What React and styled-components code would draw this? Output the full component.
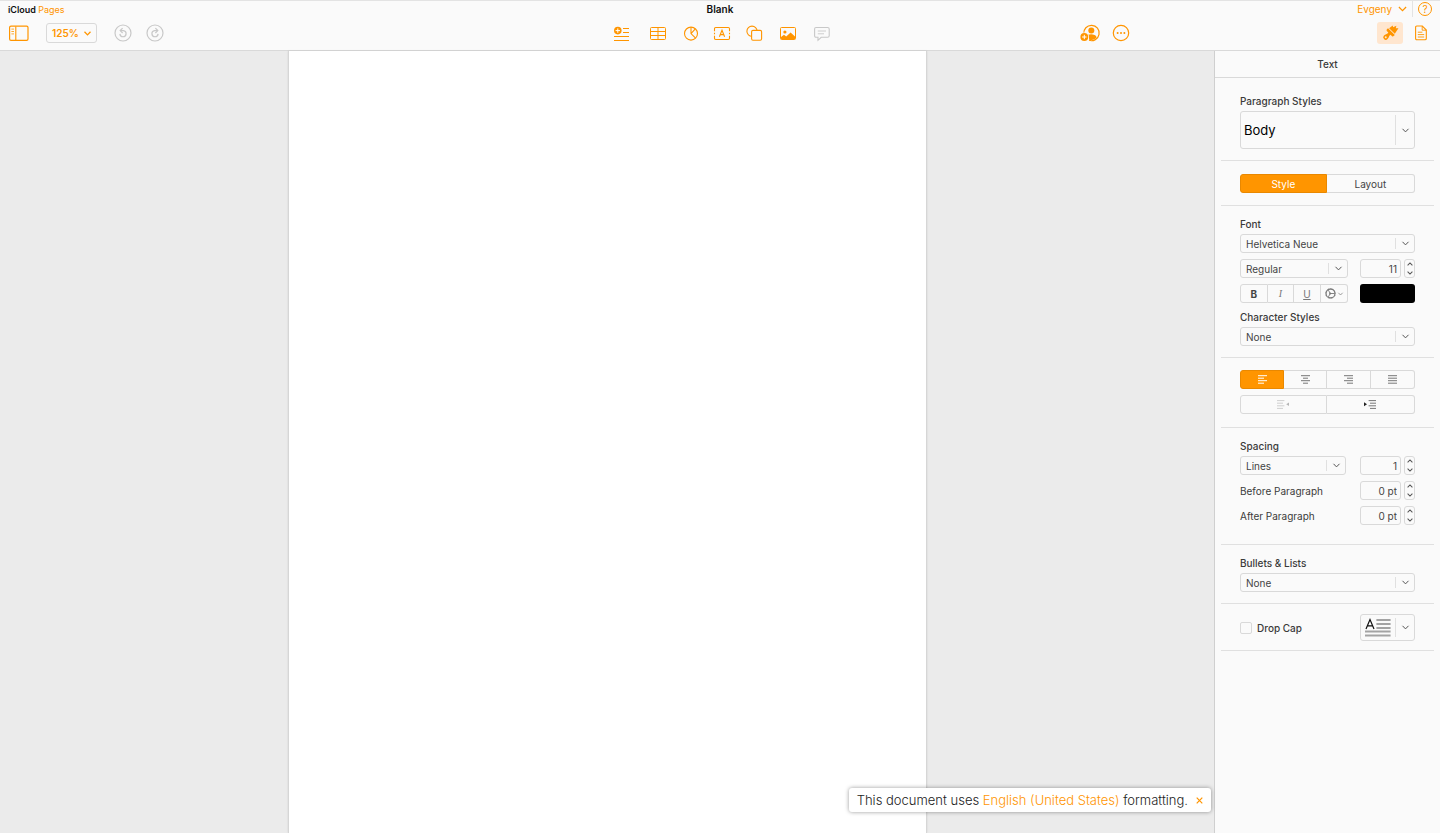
import React, { useState } from 'react'
import styled, { createGlobalStyle } from 'styled-components'

const orange = '#ff9500'
const line = '#d9d9d9'

// toolbar icons
const Chevron = ({ size = 7, weight = 1 }) => (
  <svg
    width={size}
    height={Math.round((size * 5) / 7)}
    viewBox="0 0 7 5"
    fill="none"
    stroke="currentColor"
    aria-hidden="true"
  >
    <path d="M0.5 0.8 L3.5 3.9 L6.5 0.8" strokeWidth={weight} />
  </svg>
)

const SidebarIcon = () => (
  <svg width="20" height="16" viewBox="0 0 20 16" fill="none" stroke="currentColor">
    <rect x="0.6" y="1.2" width="18.4" height="14.2" rx="1.4" strokeWidth="1.2" />
    <path d="M6.8 1.4 V15.4" strokeWidth="1.1" />
    <path d="M2.4 4.1 H5 M2.4 6.5 H5 M2.4 8.9 H5" strokeWidth="0.8" />
  </svg>
)

const UndoIcon = ({ flip }) => (
  <svg width="18" height="18" viewBox="0 0 18 18" fill="none" stroke="currentColor">
    <circle cx="9" cy="9" r="8" strokeWidth="1.2" />
    <g transform={flip ? 'translate(18 0) scale(-1 1)' : undefined}>
      <path d="M6.6 6.6 H9.4 A3.1 3.1 0 1 1 5.9 9.9" strokeWidth="1.2" />
      <path d="M8.6 4.2 L6.2 6.6 L8.6 9" strokeWidth="1.2" />
    </g>
  </svg>
)

const InsertIcon = () => (
  <svg width="16" height="16" viewBox="0 0 16 16" fill="none" stroke="currentColor">
    <circle cx="3.8" cy="5.6" r="3.8" fill="currentColor" stroke="none" />
    <path d="M3.8 3.4 V7.8 M1.6 5.6 H6" stroke="#fff" strokeWidth="1" />
    <path d="M9 3.5 H15 M9 7.5 H15 M0 11.5 H15 M0 15.5 H15" strokeWidth="1.1" />
  </svg>
)

const TableIcon = () => (
  <svg width="16" height="16" viewBox="0 0 16 16" fill="none" stroke="currentColor" strokeWidth="1">
    <rect x="0.5" y="2.5" width="15" height="12" rx="1" />
    <path d="M8 2.5 V14.5 M0.5 6.5 H15.5 M0.5 10.5 H15.5" />
  </svg>
)

const ChartIcon = () => (
  <svg width="14" height="16" viewBox="0 0 14 16" fill="none" stroke="currentColor" strokeWidth="1.1">
    <circle cx="7" cy="8.6" r="6.5" />
    <path d="M7 2.1 V8.6 L11.6 13.2 M7 8.6 L11.3 3.8" />
  </svg>
)

const TextIcon = () => (
  <svg width="16" height="16" viewBox="0 0 16 16" fill="none" stroke="currentColor" strokeWidth="1.1">
    <path d="M0.5 6.2 V3.7 Q0.5 2.5 1.7 2.5 H14.3 Q15.5 2.5 15.5 3.7 V6.2 M15.5 10.8 V13.3 Q15.5 14.5 14.3 14.5 H1.7 Q0.5 14.5 0.5 13.3 V10.8 M0.5 7.8 V9.2 M15.5 7.8 V9.2" />
    <path d="M5.4 11.7 L8 5.3 L10.6 11.7 M6.3 9.6 H9.7" />
  </svg>
)

const ShapeIcon = () => (
  <svg width="16" height="16" viewBox="0 0 16 16" fill="none" stroke="currentColor" strokeWidth="1.1">
    <circle cx="6" cy="6.2" r="5.1" />
    <rect x="5.6" y="5.4" width="10" height="9.8" rx="1.4" fill="#fafafa" />
  </svg>
)

const ImageIcon = () => (
  <svg width="16" height="16" viewBox="0 0 16 16" fill="none" stroke="currentColor">
    <rect x="0.5" y="2.5" width="15" height="12" rx="1" />
    <circle cx="4.9" cy="7" r="1.6" fill="currentColor" stroke="none" />
    <path d="M1 14 V12 L4 9.8 L6.2 11.4 L10.6 7.4 L15 11.4 V14 Z" fill="currentColor" stroke="none" />
  </svg>
)

const CommentIcon = () => (
  <svg width="16" height="16" viewBox="0 0 16 16" fill="none" stroke="currentColor" strokeWidth="1.1">
    <path d="M2 2.5 H13.6 Q15.2 2.5 15.2 4 V10.8 Q15.2 12.3 13.6 12.3 H7.2 L4 15.3 V12.3 H2 Q0.6 12.3 0.6 10.8 V4 Q0.6 2.5 2 2.5 Z" />
    <path d="M3.8 6 H12 M3.8 8.8 H10" strokeWidth="0.9" />
  </svg>
)

const ShareIcon = () => (
  <svg width="20" height="18" viewBox="0 0 20 18" fill="none" stroke="currentColor">
    <path d="M3.8 9.8 A7.7 7.7 0 1 1 9 16.3" strokeWidth="1.2" />
    <circle cx="11.3" cy="6.6" r="3" fill="currentColor" stroke="none" />
    <path d="M8.2 10.8 Q11.3 9.8 14.6 11 Q16.6 11.8 16.5 13.6 Q14.2 16.4 9.4 16.3 Z" fill="currentColor" stroke="none" />
    <circle cx="4.3" cy="13" r="4.6" fill="#fafafa" stroke="none" />
    <circle cx="4.3" cy="13" r="3.9" fill="currentColor" stroke="none" />
    <path d="M4.3 10.8 V15.2 M2.1 13 H6.5" stroke="#fff" strokeWidth="1" />
  </svg>
)

const MoreIcon = () => (
  <svg width="18" height="18" viewBox="0 0 18 18" fill="none" stroke="currentColor">
    <circle cx="9" cy="9" r="7.7" strokeWidth="1.2" />
    <g fill="currentColor" stroke="none">
      <circle cx="5.6" cy="9" r="1" />
      <circle cx="9" cy="9" r="1" />
      <circle cx="12.4" cy="9" r="1" />
    </g>
  </svg>
)

const BrushIcon = () => (
  <svg width="18" height="18" viewBox="0 0 18 18" fill="currentColor">
    <g transform="rotate(45 9 9)">
      <path d="M5 6.2 L5.6 1.8 L7.2 2.8 L8.4 -0.6 L9.8 1.6 L11.6 -0.4 L12.2 2.4 L13 6.2 Z" />
      <path d="M4.2 7 H13.8 V8.6 Q13.8 9.8 12.4 9.8 H10.5 V11.4 Q11.5 13 11.5 15 A2.5 2.5 0 0 1 6.5 15 Q6.5 13 7.5 11.4 V9.8 H5.6 Q4.2 9.8 4.2 8.6 Z" />
      <circle cx="9" cy="15" r="1" fill="#ffe6cf" />
    </g>
  </svg>
)

const DocumentIcon = () => (
  <svg width="12" height="16" viewBox="0 0 12 16" fill="none" stroke="currentColor">
    <path d="M1.8 1 H7.3 L11.3 5 V13.4 Q11.3 14.7 10 14.7 H1.8 Q0.6 14.7 0.6 13.4 V2.2 Q0.6 1 1.8 1 Z" strokeWidth="1.1" />
    <path d="M7.2 1 V5.2 H11.3 M2.8 7.2 H7.4 M2.8 9.6 H9.2 M2.8 12 H9.2" strokeWidth="0.9" />
  </svg>
)

const GearIcon = () => (
  <svg width="11" height="11" viewBox="0 0 11 11" fill="none" stroke="currentColor">
    <circle cx="5.5" cy="5.5" r="4.4" strokeWidth="1.1" />
    <circle cx="5.5" cy="5.5" r="5" strokeWidth="0.8" strokeDasharray="0.8 0.8" />
    <path d="M5.2 5.5 L3.4 2.1 M5.2 5.5 L3.4 8.9 M5.2 5.5 H9.6" strokeWidth="0.9" />
    <circle cx="5.2" cy="5.5" r="1" fill="currentColor" stroke="none" />
  </svg>
)

// each row is [x1, x2]
const alignments = {
  left: [[0, 9], [0, 6], [0, 9], [0, 6]],
  center: [[0, 9], [2, 7], [0, 9], [2, 7]],
  right: [[0, 9], [3, 9], [0, 9], [3, 9]],
  justify: [[0, 9], [0, 9], [0, 9], [0, 9]],
}

const AlignIcon = ({ type }) => (
  <svg width="9" height="9" viewBox="0 0 9 9" stroke="currentColor" strokeWidth="1">
    {alignments[type].map(([x1, x2], i) => (
      <path key={i} d={`M${x1} ${0.7 + i * 2.5} H${x2}`} />
    ))}
  </svg>
)

const IndentIcon = ({ outdent }) => (
  <svg width="12" height="9" viewBox="0 0 12 9" fill="none" stroke="currentColor">
    {outdent ? (
      <>
        <path d="M0 0.6 H7.4 M0 3.2 H6 M0 5.8 H7.4 M0 8.4 H6" />
        <path d="M12 2.4 V6 L9.2 4.2 Z" fill="#b5b5b5" stroke="none" />
      </>
    ) : (
      <>
        <path d="M4.6 0.6 H12 M6 3.2 H12 M4.6 5.8 H12 M6 8.4 H12" />
        <path d="M0 2.2 V6.2 L3 4.2 Z" fill="#222" stroke="none" />
      </>
    )}
  </svg>
)

const DropCapIcon = () => (
  <svg width="26" height="18" viewBox="0 0 26 18" fill="none" stroke="#a3a3a3" strokeWidth="2">
    <path d="M11.4 1 H25.6 M11.4 5 H25.6 M11.4 9 H25.6 M0 12.6 H25.6 M0 16.4 H25.6" />
    <path d="M1 10 L5 0.5 L9 10 M2.3 6.8 H7.7" stroke="#111" strokeWidth="1.2" />
  </svg>
)

const tools = [
  { name: 'Insert', icon: <InsertIcon />, gap: 20 },
  { name: 'Table', icon: <TableIcon />, gap: 18 },
  { name: 'Chart', icon: <ChartIcon />, gap: 16 },
  { name: 'Text box', icon: <TextIcon />, gap: 16 },
  { name: 'Shape', icon: <ShapeIcon />, gap: 18 },
  { name: 'Media', icon: <ImageIcon />, gap: 18 },
  { name: 'Comment', icon: <CommentIcon />, gap: 0, muted: true },
]

const Dropdown = ({ label, id, value, options = [], large }) => (
  <SelectWrapper $large={large}>
    <Select id={id} aria-label={label} defaultValue={value} $large={large}>
      {[value, ...options].map((option) => (
        <option key={option}>{option}</option>
      ))}
    </Select>
    <SelectArrow>
      <Chevron />
    </SelectArrow>
  </SelectWrapper>
)

const NumberField = ({ id, label, value }) => (
  <NumberWrapper>
    <NumberInput id={id} type="text" aria-label={label} defaultValue={value} />
    <Stepper>
      <StepButton type="button" aria-label="Increase" $up>
        <Chevron size={6} weight={1.3} />
      </StepButton>
      <StepButton type="button" aria-label="Decrease">
        <Chevron size={6} weight={1.3} />
      </StepButton>
    </Stepper>
  </NumberWrapper>
)

const App = () => {
  const [tab, setTab] = useState('Style')
  const [align, setAlign] = useState('left')
  const [notice, setNotice] = useState(true)

  return (
    <>
      <GlobalStyle />
      <Page>
        <Header>
          <TitleBar>
            <Brand href="#">
              iCloud <span>Pages</span>
            </Brand>
            <DocTitle>Blank</DocTitle>
            <Account>
              <UserButton type="button">
                Evgeny
                <Chevron size={9} />
              </UserButton>
              <HelpButton type="button" aria-label="Help">?</HelpButton>
            </Account>
          </TitleBar>
          <Toolbar>
            <LeftTools>
              <IconButton type="button" aria-label="View"><SidebarIcon /></IconButton>
              <ZoomButton type="button">
                125%
                <Chevron weight={1.3} />
              </ZoomButton>
              <History>
                <IconButton type="button" aria-label="Undo" $muted><UndoIcon /></IconButton>
                <IconButton type="button" aria-label="Redo" $muted><UndoIcon flip /></IconButton>
              </History>
            </LeftTools>
            <CenterTools>
              {tools.map((tool) => (
                <IconButton
                  key={tool.name}
                  type="button"
                  aria-label={tool.name}
                  $muted={tool.muted}
                  $gap={tool.gap}
                >
                  {tool.icon}
                </IconButton>
              ))}
            </CenterTools>
            <RightTools>
              <ToolGroup>
                <IconButton type="button" aria-label="Collaborate"><ShareIcon /></IconButton>
                <IconButton type="button" aria-label="More"><MoreIcon /></IconButton>
              </ToolGroup>
              <ToolGroup>
                <FormatButton type="button" aria-label="Format"><BrushIcon /></FormatButton>
                <IconButton type="button" aria-label="Document"><DocumentIcon /></IconButton>
              </ToolGroup>
            </RightTools>
          </Toolbar>
        </Header>

        <Main>
          <Canvas>
            <Sheet />
            {notice && (
              <Notice>
                <p>
                  This document uses <a href="#">English (United States)</a> formatting.
                </p>
                <CloseButton type="button" aria-label="Close" onClick={() => setNotice(false)}>
                  <svg width="7" height="7" viewBox="0 0 7 7" stroke="currentColor" strokeWidth="1.2">
                    <path d="M0.7 0.7 L6.3 6.3 M6.3 0.7 L0.7 6.3" />
                  </svg>
                </CloseButton>
              </Notice>
            )}
          </Canvas>

          <Inspector>
            <InspectorTitle>Text</InspectorTitle>

            <Section $top={16} $bottom={11}>
              <Label htmlFor="paragraph">Paragraph Styles</Label>
              <Dropdown id="paragraph" value="Body" options={['Title', 'Heading']} large />
            </Section>

            <Section $top={13} $bottom={12}>
              <Segment>
                {['Style', 'Layout'].map((name) => (
                  <SegmentButton
                    key={name}
                    type="button"
                    $active={tab === name}
                    onClick={() => setTab(name)}
                  >
                    {name}
                  </SegmentButton>
                ))}
              </Segment>
            </Section>

            <Section $top={11} $bottom={11}>
              <Label htmlFor="font">Font</Label>
              <Controls>
                <Dropdown id="font" value="Helvetica Neue" options={['Arial', 'Georgia']} />
                <Row>
                  <Dropdown label="Font weight" value="Regular" options={['Bold', 'Light']} />
                  <NumberField label="Font size" value="11" />
                </Row>
                <Row>
                  <Segment>
                    <SegmentButton type="button" aria-label="Bold"><b>B</b></SegmentButton>
                    <SegmentButton type="button" aria-label="Italic" $serif $soft><i>I</i></SegmentButton>
                    <SegmentButton type="button" aria-label="Underline" $soft><u>U</u></SegmentButton>
                    <SegmentButton type="button" aria-label="Advanced options" $soft>
                      <GearIcon />
                      <Chevron size={5} />
                    </SegmentButton>
                  </Segment>
                  <ColorInput type="color" aria-label="Text color" defaultValue="#000000" />
                </Row>
              </Controls>
              <Label htmlFor="character" $top={7}>Character Styles</Label>
              <Dropdown id="character" value="None" options={['Emphasis', 'Underline']} />
            </Section>

            <Section $top={12} $bottom={13}>
              <Controls>
                <Segment>
                  {Object.keys(alignments).map((type) => (
                    <SegmentButton
                      key={type}
                      type="button"
                      aria-label={`Align ${type}`}
                      $soft
                      $active={align === type}
                      onClick={() => setAlign(type)}
                    >
                      <AlignIcon type={type} />
                    </SegmentButton>
                  ))}
                </Segment>
                <Segment>
                  <SegmentButton type="button" aria-label="Decrease indent" $disabled>
                    <IndentIcon outdent />
                  </SegmentButton>
                  <SegmentButton type="button" aria-label="Increase indent" $soft>
                    <IndentIcon />
                  </SegmentButton>
                </Segment>
              </Controls>
            </Section>

            <Section $top={11} $bottom={19}>
              <Label htmlFor="spacing">Spacing</Label>
              <Controls>
                <Row $gap={14}>
                  <Dropdown id="spacing" value="Lines" options={['Exactly', 'Between']} />
                  <NumberField label="Line spacing" value="1" />
                </Row>
                <Row>
                  <FieldLabel htmlFor="before">Before Paragraph</FieldLabel>
                  <NumberField id="before" value="0 pt" />
                </Row>
                <Row>
                  <FieldLabel htmlFor="after">After Paragraph</FieldLabel>
                  <NumberField id="after" value="0 pt" />
                </Row>
              </Controls>
            </Section>

            <Section $top={11} $bottom={11}>
              <Label htmlFor="bullets">Bullets &amp; Lists</Label>
              <Dropdown id="bullets" value="None" options={['Bullet', 'Numbered']} />
            </Section>

            <Section $top={10} $bottom={9}>
              <Row>
                <CheckLabel>
                  <Checkbox type="checkbox" />
                  Drop Cap
                </CheckLabel>
                <DropCapButton type="button" aria-label="Drop cap style">
                  <DropCapIcon />
                  <SelectArrow>
                    <Chevron />
                  </SelectArrow>
                </DropCapButton>
              </Row>
            </Section>
          </Inspector>
        </Main>
      </Page>
    </>
  )
}

export default App

const GlobalStyle = createGlobalStyle`
  * {
    box-sizing: border-box;
  }
  body {
    margin: 0;
    font-family: Inter, 'Liberation Sans', sans-serif;
    font-size: 10px;
    color: #3a3a3a;
  }
  button, input, select {
    margin: 0;
    padding: 0;
    font: inherit;
    color: inherit;
    background: none;
    border: 0;
  }
  button {
    cursor: pointer;
  }
  svg {
    display: block;
    flex: none;
    overflow: visible;
  }
`
const Page = styled.div`
  display: flex;
  flex-direction: column;
  min-height: 100vh;
`
const Header = styled.header`
  background-color: #fafafa;
  border-top: 1px solid #e3e3e3;
  border-bottom: 1px solid ${line};
`
const TitleBar = styled.div`
  display: grid;
  grid-template-columns: 1fr auto 1fr;
  align-items: center;
  height: 16px;
`
const Brand = styled.a`
  padding-left: 8px;
  font-size: 9px;
  font-weight: 600;
  color: #111;
  text-decoration: none;

  span {
    font-weight: 400;
    color: ${orange};
  }
`
const DocTitle = styled.h1`
  margin: 0;
  font-size: 10px;
  font-weight: 600;
  color: #111;
`
const Account = styled.div`
  display: flex;
  justify-content: flex-end;
  align-items: center;
  height: 16px;
  padding-right: 8px;
  color: ${orange};
`
const UserButton = styled.button`
  display: flex;
  align-items: center;
  gap: 6px;
  height: 16px;
  padding-right: 5px;
  border-right: 1px solid #e3e3e3;
`
const HelpButton = styled.button`
  display: flex;
  justify-content: center;
  align-items: center;
  width: 14px;
  height: 14px;
  margin-left: 5px;
  border: 1px solid ${orange};
  border-radius: 50%;
`
const Toolbar = styled.div`
  display: grid;
  grid-template-columns: 1fr auto 1fr;
  align-items: center;
  height: 33px;
  padding-bottom: 1px;
`
const IconButton = styled.button`
  display: flex;
  margin-right: ${({ $gap }) => $gap || 0}px;
  color: ${({ $muted }) => ($muted ? '#c8c8c8' : orange)};
`
const LeftTools = styled.div`
  display: flex;
  align-items: center;
  gap: 17px;
  padding-left: 9px;
`
const ZoomButton = styled.button`
  display: flex;
  align-items: center;
  justify-content: center;
  gap: 5px;
  width: 51px;
  height: 20px;
  border: 1px solid ${line};
  border-radius: 3px;
  font-weight: 600;
  color: ${orange};
`
const History = styled.div`
  display: flex;
  gap: 14px;
`
const CenterTools = styled.div`
  display: flex;
  align-items: center;
  padding-left: 4px;
`
const RightTools = styled.div`
  display: flex;
  justify-content: flex-end;
  align-items: center;
  gap: 247px;
  padding-right: 13px;
`
const ToolGroup = styled.div`
  display: flex;
  align-items: center;
  gap: 12px;
`
const FormatButton = styled.button`
  display: flex;
  justify-content: center;
  align-items: center;
  width: 26px;
  height: 22px;
  border-radius: 3px;
  background-color: #ffe6cf;
  color: ${orange};
`
const Main = styled.main`
  display: flex;
  flex: 1;
`
const Canvas = styled.div`
  position: relative;
  display: flex;
  justify-content: center;
  flex: 1;
  background-color: #ebebeb;
`
const Sheet = styled.article`
  width: 639px;
  max-width: 100%;
  background-color: #fff;
  border: 1px solid #d6d6d6;
  border-width: 0 1px;
  box-shadow: 0 0 2px rgba(0, 0, 0, 0.1);
`
const Notice = styled.div`
  position: absolute;
  right: 3px;
  bottom: 21px;
  display: flex;
  align-items: center;
  gap: 8px;
  height: 24px;
  padding: 0 8px;
  background-color: #fff;
  border-radius: 3px;
  box-shadow: 0 0 4px rgba(0, 0, 0, 0.4);
  font-size: 13px;
  font-weight: 300;
  color: #222;

  p {
    margin: 0;
  }
  a {
    color: ${orange};
    text-decoration: none;
  }
`
const CloseButton = styled.button`
  display: flex;
  color: ${orange};
`
const Inspector = styled.aside`
  flex: none;
  width: 226px;
  background-color: #fafafa;
  border-left: 1px solid #cfcfcf;
`
const InspectorTitle = styled.h2`
  display: flex;
  justify-content: center;
  align-items: center;
  height: 27px;
  margin: 0;
  border-bottom: 1px solid ${line};
  font-size: 10px;
  font-weight: 500;
`
const Section = styled.section`
  margin: 0 6px;
  padding: ${({ $top, $bottom }) => `${$top}px 19px ${$bottom}px`};
  border-bottom: 1px solid #e0e0e0;
`
const Label = styled.label`
  display: block;
  margin-top: ${({ $top }) => $top || 0}px;
  margin-bottom: 3px;
  line-height: 14px;
  font-weight: 500;
`
const Controls = styled.div`
  display: grid;
  gap: 6px;
`
const Row = styled.div`
  display: grid;
  grid-template-columns: minmax(0, 1fr) 55px;
  column-gap: ${({ $gap }) => $gap || 12}px;
  align-items: center;
`
const SelectWrapper = styled.div`
  display: grid;
  grid-template-columns: 1fr 19px;
  height: ${({ $large }) => ($large ? 38 : 19)}px;
  border: 1px solid ${line};
  border-radius: 3px;
`
const Select = styled.select`
  grid-area: 1 / 1 / 2 / 3;
  min-width: 0;
  appearance: none;
  padding-left: ${({ $large }) => ($large ? 3 : 5)}px;
  font-size: ${({ $large }) => ($large ? 13 : 10)}px;
  color: ${({ $large }) => ($large ? '#000' : '#444')};
`
const SelectArrow = styled.span`
  grid-area: 1 / 2;
  display: flex;
  justify-content: center;
  align-items: center;
  margin: 3px 0;
  border-left: 1px solid #e0e0e0;
  color: #555;
  pointer-events: none;
`
const NumberWrapper = styled.div`
  display: grid;
  grid-template-columns: minmax(0, 1fr) 11px;
  gap: 3px;
  height: 19px;
`
const NumberInput = styled.input`
  min-width: 0;
  padding-right: 3px;
  border: 1px solid ${line};
  border-radius: 3px;
  text-align: right;
  color: #444;
`
const Stepper = styled.div`
  display: grid;
  grid-template-rows: 1fr 1fr;
  border: 1px solid ${line};
  border-radius: 3px;
`
const StepButton = styled.button`
  display: flex;
  justify-content: center;
  align-items: center;
  color: #555;

  svg {
    transform: ${({ $up }) => ($up ? 'rotate(180deg)' : 'none')};
  }
`
const Segment = styled.div`
  display: flex;
  height: 19px;
`
const SegmentButton = styled.button`
  display: flex;
  justify-content: center;
  align-items: center;
  gap: 2px;
  flex: 1;
  border: 1px solid ${({ $active }) => ($active ? '#e98800' : line)};
  background-color: ${({ $active }) => ($active ? orange : 'transparent')};
  color: ${({ $active, $soft, $disabled }) => {
    if ($active) return '#fff'
    if ($disabled) return '#cfcfcf'
    return $soft ? '#777' : '#444'
  }};
  font-family: ${({ $serif }) => ($serif ? "'Liberation Serif', serif" : 'inherit')};

  &:not(:first-child) {
    border-left: 0;
  }
  &:first-child {
    border-radius: 3px 0 0 3px;
  }
  &:last-child {
    flex-grow: 1.03;
    border-radius: 0 3px 3px 0;
  }
`
const ColorInput = styled.input`
  width: 100%;
  height: 19px;
  appearance: none;
  border-radius: 3px;
  overflow: hidden;

  &::-webkit-color-swatch-wrapper {
    padding: 0;
  }
  &::-webkit-color-swatch {
    border: 0;
  }
`
const FieldLabel = styled.label`
  line-height: 14px;
`
const CheckLabel = styled.label`
  display: flex;
  align-items: center;
  gap: 5px;
  font-weight: 500;
`
const Checkbox = styled.input`
  appearance: none;
  width: 12px;
  height: 12px;
  border: 1px solid ${line};
  border-radius: 2px;

  &:checked {
    background-color: ${orange};
  }
`
const DropCapButton = styled.button`
  display: grid;
  grid-template-columns: 1fr 19px;
  justify-items: center;
  align-items: center;
  height: 27px;
  border: 1px solid ${line};
  border-radius: 3px;

  ${SelectArrow} {
    align-self: stretch;
    justify-self: stretch;
  }
`
